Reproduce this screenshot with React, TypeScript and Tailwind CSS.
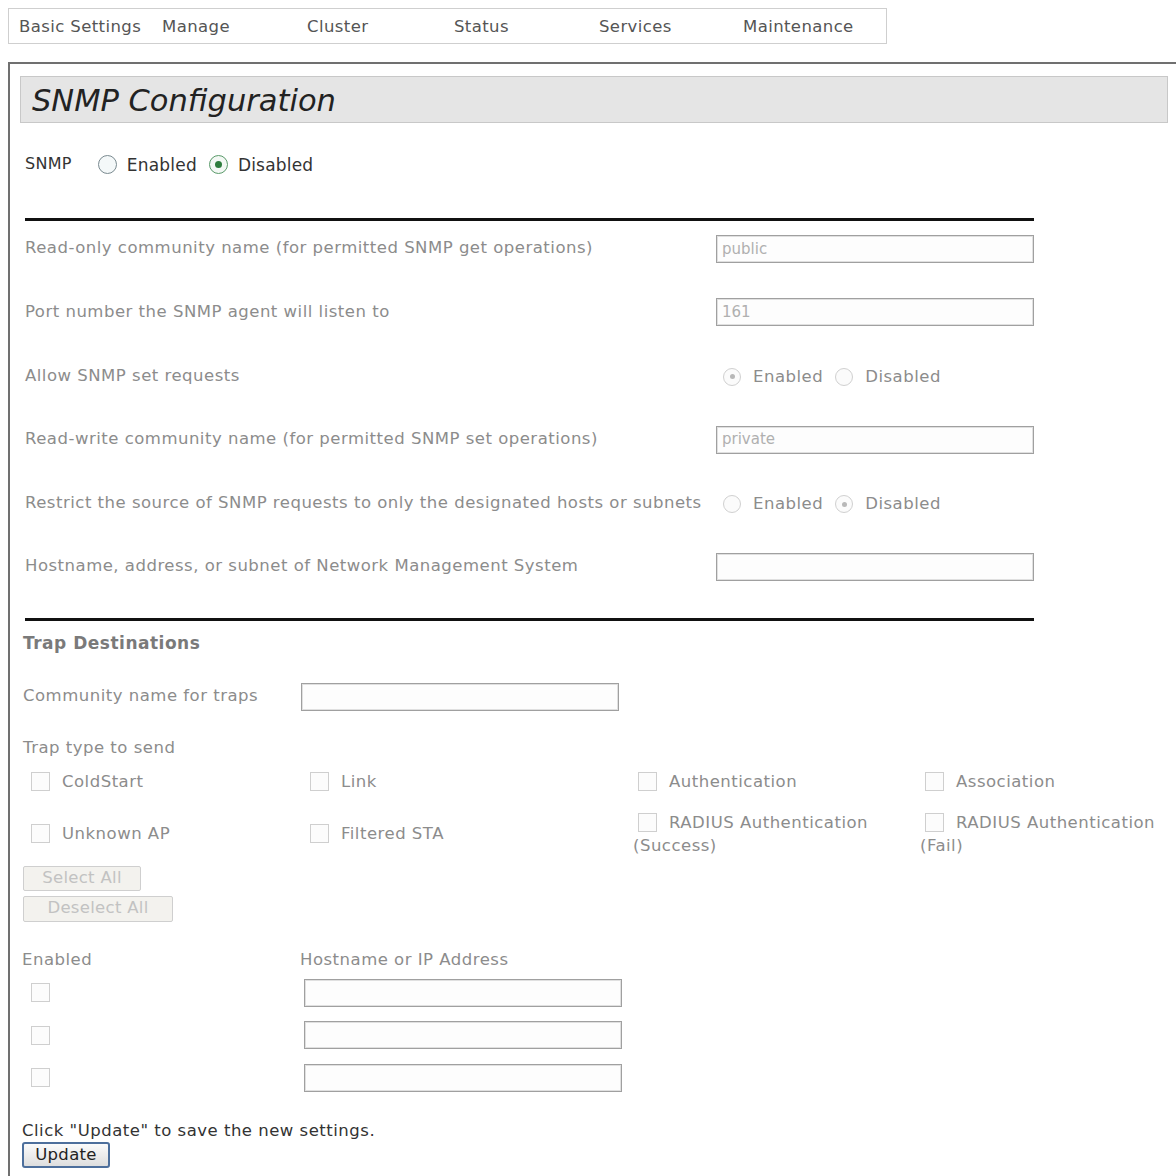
import React from "react";

function Radio({ checked, active }: { checked?: boolean; active?: boolean }) {
  if (active) {
    return (
      <span
        className={
          "flex items-center justify-center w-[19px] h-[19px] rounded-full border-[1.5px] shrink-0 " +
          (checked ? "border-[#5a9a6a] bg-[#f3f8f4]" : "border-[#7a8a90] bg-[#f4f8f9]")
        }
      >
        {checked ? <span className="block w-[7px] h-[7px] rounded-full bg-[#2e7d3e]" /> : null}
      </span>
    );
  }
  return (
    <span className="flex items-center justify-center w-[18px] h-[18px] rounded-full border border-[#d0d0d0] bg-[#fbfbfb] shrink-0">
      {checked ? <span className="block w-[5px] h-[5px] rounded-full bg-[#b8b8b8]" /> : null}
    </span>
  );
}

function Box() {
  return <span className="block w-[19px] h-[19px] border border-[#cfcfcf] bg-[#fcfcfc] shrink-0" />;
}

function TextInput({ value, w = 318, h = 28 }: { value?: string; w?: number; h?: number }) {
  return (
    <div
      className="border border-[#a0a0a0] bg-[#fdfdfd] shadow-[inset_0_0_0_1px_#e0e0e0] flex items-center pl-[5px] text-[15px] text-[#b0b0b0] box-border"
      style={{ width: w, height: h }}
    >
      {value}
    </div>
  );
}

function Row({ label, children }: { label: string; children?: React.ReactNode }) {
  return (
    <div className="flex items-center h-[63.6px]">
      <div className="w-[691px] shrink-0 text-[16.5px] tracking-[0.5px] text-[#8c8c8c] whitespace-nowrap">{label}</div>
      {children}
    </div>
  );
}

function DisabledRadios({ enabled }: { enabled: boolean }) {
  return (
    <div className="flex items-center text-[16.5px] tracking-[0.5px] text-[#8c8c8c] pt-[2px]">
      <span className="ml-[7px] flex">
        <Radio checked={enabled} />
      </span>
      <span className="ml-[12px]">Enabled</span>
      <span className="ml-[12px] flex">
        <Radio checked={!enabled} />
      </span>
      <span className="ml-[12px]">Disabled</span>
    </div>
  );
}

function TrapCell({ label, second, width }: { label: string; second?: string; width: number }) {
  return (
    <div className="pl-[3px] text-[16.5px] tracking-[0.5px] text-[#8c8c8c] leading-[23px] shrink-0" style={{ width }}>
      <div className="flex items-center">
        <span className="ml-[5px] mr-[12px] flex">
          <Box />
        </span>
        <span className="whitespace-nowrap">{label}</span>
      </div>
      {second ? <div>{second}</div> : null}
    </div>
  );
}

export default function App() {
  const navItems = [
    { t: "Basic Settings", w: 143 },
    { t: "Manage", w: 145 },
    { t: "Cluster", w: 147 },
    { t: "Status", w: 145 },
    { t: "Services", w: 144 },
    { t: "Maintenance", w: 130 },
  ];
  return (
    <div className="font-['DejaVu_Sans',_Verdana,_sans-serif] bg-white w-[1176px] h-[1176px] overflow-hidden relative">
      {/* nav */}
      <div className="pt-[8px] pl-[8px]">
        <div className="w-[879px] h-[36px] border border-[#cfcfcf] flex items-center pl-[10px] text-[16.5px] tracking-[0.4px] text-[#555]">
          {navItems.map((n) => (
            <div key={n.t} style={{ width: n.w }} className="shrink-0 whitespace-nowrap pt-[2px]">
              {n.t}
            </div>
          ))}
        </div>
      </div>

      {/* main panel */}
      <div className="mt-[18px] ml-[8px] border-t-2 border-l-2 border-[#707070] pt-[12px] pb-[40px]">
        <div className="ml-[10px] mr-[8px] h-[47px] bg-[#e5e5e5] border border-[#c8c8c8] flex items-center pl-[11px] pt-[4px]">
          <span className="text-[30.5px] italic text-[#222] leading-none">SNMP Configuration</span>
        </div>

        <div className="ml-[15px]">
          {/* SNMP enable row */}
          <div className="flex items-center h-[44px] mt-[21px] text-[#333]">
            <span className="text-[16px] tracking-[0.3px] -mt-[4px]">SNMP</span>
            <span className="ml-[26px] flex -mt-[3px]">
              <Radio active />
            </span>
            <span className="ml-[10px] text-[17px] tracking-[0.2px]">Enabled</span>
            <span className="ml-[12px] flex -mt-[3px]">
              <Radio active checked />
            </span>
            <span className="ml-[10px] text-[17px] tracking-[0.2px]">Disabled</span>
          </div>

          <div className="mt-[30px] w-[1009px] h-[3px] bg-[#111]" />
          <div className="-mt-[4px]">
            <Row label="Read-only community name (for permitted SNMP get operations)">
              <TextInput value="public" />
            </Row>
            <Row label="Port number the SNMP agent will listen to">
              <TextInput value="161" />
            </Row>
            <Row label="Allow SNMP set requests">
              <DisabledRadios enabled />
            </Row>
            <Row label="Read-write community name (for permitted SNMP set operations)">
              <TextInput value="private" />
            </Row>
            <Row label="Restrict the source of SNMP requests to only the designated hosts or subnets">
              <DisabledRadios enabled={false} />
            </Row>
            <Row label="Hostname, address, or subnet of Network Management System">
              <TextInput />
            </Row>
          </div>
          <div className="mt-[19px] w-[1009px] h-[3px] bg-[#111]" />
        </div>

        {/* Trap destinations */}
        <div className="ml-[13px]">
          <div className="h-[46px] flex items-center text-[17px] tracking-[0.5px] font-bold text-[#7a7a7a]">Trap Destinations</div>
          <div className="h-[60px] flex items-center">
            <div className="w-[278px] shrink-0 text-[16.5px] tracking-[0.5px] text-[#8c8c8c]">Community name for traps</div>
            <TextInput />
          </div>
          <div className="mt-[11px] h-[22px] flex items-center text-[16.5px] tracking-[0.5px] text-[#8c8c8c]">Trap type to send</div>
          <div className="flex items-center h-[44px]">
            <TrapCell label="ColdStart" width={279} />
            <TrapCell label="Link" width={328} />
            <TrapCell label="Authentication" width={287} />
            <TrapCell label="Association" width={250} />
          </div>
          <div className="flex items-center h-[60px]">
            <TrapCell label="Unknown AP" width={279} />
            <TrapCell label="Filtered STA" width={328} />
            <TrapCell label="RADIUS Authentication" second="(Success)" width={287} />
            <TrapCell label="RADIUS Authentication" second="(Fail)" width={250} />
          </div>
          <div className="mt-[2px] flex flex-col items-start gap-[5px]">
            <button className="w-[118px] h-[25px] border border-[#cfcfcf] rounded-[2px] bg-[#f3f2ee] text-[16.5px] tracking-[0.3px] text-[#c2c2c2] leading-none">
              Select All
            </button>
            <button className="w-[150px] h-[26px] border border-[#cfcfcf] rounded-[2px] bg-[#f3f2ee] text-[16.5px] tracking-[0.3px] text-[#c2c2c2] leading-none">
              Deselect All
            </button>
          </div>

          <div className="mt-[28px] h-[22px] flex items-center text-[16.5px] tracking-[0.5px] text-[#8c8c8c]">
            <div className="w-[278px] shrink-0 -ml-[1px]">Enabled</div>
            <div>Hostname or IP Address</div>
          </div>
          {[0, 1, 2].map((i) => (
            <div key={i} className="flex items-center h-[42.5px]">
              <div className="w-[281px] shrink-0 pl-[8px] flex">
                <Box />
              </div>
              <TextInput />
            </div>
          ))}

          <div className="mt-[21px] h-[22px] flex items-center text-[16.5px] tracking-[0.5px] text-[#333] -ml-[1px]">
            Click "Update" to save the new settings.
          </div>
          <button className="-ml-[1px] w-[88px] h-[26px] border-2 border-[#4d6f9c] rounded-[3px] bg-gradient-to-b from-[#fbfbfb] to-[#dedede] text-[16.5px] tracking-[0.3px] text-[#222] leading-none">
            Update
          </button>
        </div>
      </div>
    </div>
  );
}
